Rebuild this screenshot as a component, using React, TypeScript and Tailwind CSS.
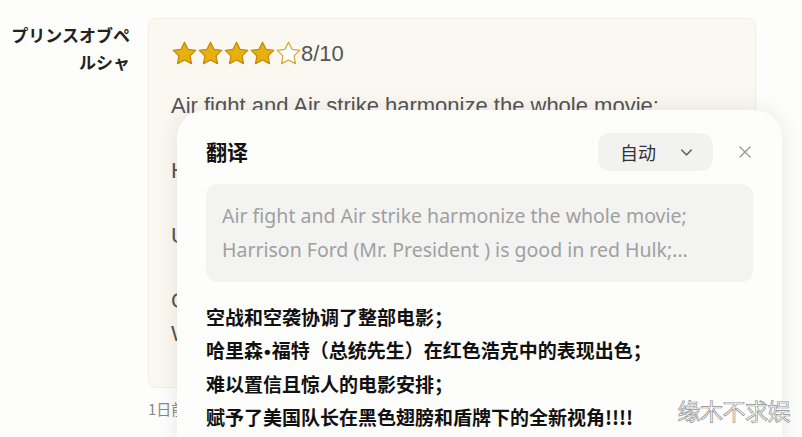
import { ChevronDown, X } from 'lucide-react'

function Star({ filled }: { filled: boolean }) {
  return (
    <svg width="27" height="27" viewBox="0 0 24 24" className="-mr-[1px]">
      <polygon
        points="12,2 15.09,8.26 22,9.27 17,14.14 18.18,21.02 12,17.77 5.82,21.02 7,14.14 2,9.27 8.91,8.26"
        fill={filled ? '#e8b00e' : '#ffffff'}
        stroke={filled ? '#c08a08' : '#d9a627'}
        strokeWidth="1.1"
        strokeLinejoin="round"
      />
    </svg>
  )
}

export default function App() {
  const rating = 4

  return (
    <div className="relative w-[802px] h-[437px] overflow-hidden bg-[#fdfdfb] font-['Liberation_Sans','Noto_Sans_CJK_SC',sans-serif]">
      <div className="flex pt-[18px]">
        {/* Reviewer name */}
        <div className="w-[148px] shrink-0 pr-[18px] pt-[3px] text-right text-[17px] font-bold leading-[27px] text-[#222] font-['Noto_Sans_CJK_JP',sans-serif]">
          プリンスオブペ
          <br />
          ルシャ
        </div>

        {/* Review card */}
        <div className="w-[608px]">
          <div className="h-[370px] rounded-lg border border-[#f1ede0] bg-[#faf8f1] pl-[22px] pt-[20px]">
            <div className="flex items-center h-[28px]">
              {[1, 2, 3, 4, 5].map(i => (
                <Star key={i} filled={i <= rating} />
              ))}
              <span className="text-[22px] text-[#555]">8/10</span>
            </div>
            <div className="mt-[22px] text-[22px] leading-[33px] text-[#555] whitespace-nowrap">
              <p>Air fight and Air strike harmonize the whole movie;</p>
              <p className="mt-[32px]">Harrison Ford (Mr. President ) is good in red Hulk;</p>
              <p className="mt-[32px]">Unbelievable and surprising film arrangement;</p>
              <p className="mt-[32px]">Captain America is given a brand new perspective</p>
              <p>With the black wings and the shield!!!!</p>
            </div>
          </div>
          <div className="mt-[10px] text-[15px] text-[#888] font-['Noto_Sans_CJK_SC',sans-serif]">1日前</div>
        </div>
      </div>

      {/* Translation popup */}
      <div className="absolute left-[177px] top-[110px] w-[605px] h-[360px] rounded-[28px] bg-[#fdfdfc] shadow-[0_0_24px_rgba(0,0,0,0.09)] px-[29px] pt-[23px] font-['Noto_Sans','Noto_Sans_CJK_SC',sans-serif]">
        <div className="flex items-center h-[38px]">
          <h2 className="flex-1 text-[21px] font-bold text-[#111] font-['Noto_Sans_CJK_SC',sans-serif]">翻译</h2>
          <button className="flex items-center h-[38px] w-[115px] rounded-[12px] bg-[#f2f2f0] pl-[22px] pr-[17px] text-[18px] text-[#333] font-['Noto_Sans_CJK_SC',sans-serif]">
            <span className="flex-1 text-left">自动</span>
            <ChevronDown size={19} color="#666" strokeWidth={1.8} />
          </button>
          <button className="ml-[22px] mr-[-2px]">
            <X size={20} color="#9a9a9a" strokeWidth={1.6} />
          </button>
        </div>

        <div className="mt-[13px] h-[98px] rounded-[12px] bg-[#f3f3f1] px-[16px] py-[15px] text-[19.5px] leading-[34px] text-[#a0a0a0]">
          <p className="line-clamp-2 whitespace-pre-line">
            {'Air fight and Air strike harmonize the whole movie;\nHarrison Ford (Mr. President ) is good in red Hulk;\nUnbelievable and surprising film arrangement;'}
          </p>
        </div>

        <div className="mt-[19px] text-[19px] font-bold leading-[32.7px] text-[#111] font-['Noto_Sans_CJK_SC',sans-serif]">
          <p>空战和空袭协调了整部电影；</p>
          <p>
            哈里森<span className="font-['Liberation_Sans'] px-[1px]">•</span>福特（总统先生）在红色浩克中的表现出色；
          </p>
          <p>难以置信且惊人的电影安排；</p>
          <p>赋予了美国队长在黑色翅膀和盾牌下的全新视角!!!!</p>
        </div>
      </div>

      {/* Watermark */}
      <div className="absolute right-[12px] top-[395px] text-[23px] leading-[30px] tracking-[-0.5px] text-white [-webkit-text-stroke:0.7px_#909090] font-['Noto_Sans_CJK_SC',sans-serif]">
        缘木不求娱
      </div>
    </div>
  )
}
